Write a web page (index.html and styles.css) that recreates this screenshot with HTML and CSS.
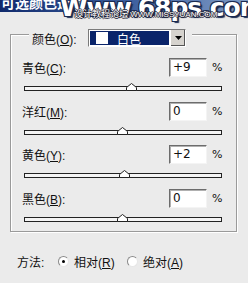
FILE: index.html
```html
<!DOCTYPE html>
<html lang="zh-CN">
<head>
    <meta charset="UTF-8">
    <title>可选颜色选项</title>
    <link rel="stylesheet" href="styles.css">
</head>
<body>
    <div class="window">
        <!-- Title bar -->
        <div class="titlebar">
            <span class="title">可选颜色选项</span>
        </div>

        <!-- Watermark over the title -->
        <div class="watermark">
            <span class="wm-big">Www.68ps.com</span>
            <span class="wm-small"><span class="wm-cn">设计教程论坛</span> WWW.MISSYUAN.COM</span>
        </div>

        <!-- Colour group -->
        <div class="group">
            <div class="group-head">
                <span class="label">颜色(<u>O</u>):</span>
                <div class="dropdown">
                    <div class="dropdown-value">
                        <span class="swatch"></span>
                        <span>白色</span>
                    </div>
                    <div class="dropdown-btn">
                        <svg width="7" height="4" viewBox="0 0 7 4"><path d="M0 0H7L3.5 4Z" fill="#000"/></svg>
                    </div>
                </div>
            </div>

            <div class="rows">
                <div class="row">
                    <div class="row-top">
                        <span class="label">青色(<u>C</u>):</span>
                        <div class="input">+9</div>
                        <span class="pct">%</span>
                    </div>
                    <div class="track">
                        <svg class="thumb" style="left: 54.5%;" width="11" height="8" viewBox="0 0 11 8"><path d="M0.5 7.5V4.5L5.5 0.5L10.5 4.5V7.5Z" fill="#fff" stroke="#222"/></svg>
                    </div>
                </div>

                <div class="row">
                    <div class="row-top">
                        <span class="label">洋红(<u>M</u>):</span>
                        <div class="input">0</div>
                        <span class="pct">%</span>
                    </div>
                    <div class="track">
                        <svg class="thumb" style="left: 50%;" width="11" height="8" viewBox="0 0 11 8"><path d="M0.5 7.5V4.5L5.5 0.5L10.5 4.5V7.5Z" fill="#fff" stroke="#222"/></svg>
                    </div>
                </div>

                <div class="row">
                    <div class="row-top">
                        <span class="label">黄色(<u>Y</u>):</span>
                        <div class="input">+2</div>
                        <span class="pct">%</span>
                    </div>
                    <div class="track">
                        <svg class="thumb" style="left: 51%;" width="11" height="8" viewBox="0 0 11 8"><path d="M0.5 7.5V4.5L5.5 0.5L10.5 4.5V7.5Z" fill="#fff" stroke="#222"/></svg>
                    </div>
                </div>

                <div class="row">
                    <div class="row-top">
                        <span class="label">黑色(<u>B</u>):</span>
                        <div class="input">0</div>
                        <span class="pct">%</span>
                    </div>
                    <div class="track">
                        <svg class="thumb" style="left: 50%;" width="11" height="8" viewBox="0 0 11 8"><path d="M0.5 7.5V4.5L5.5 0.5L10.5 4.5V7.5Z" fill="#fff" stroke="#222"/></svg>
                    </div>
                </div>
            </div>
        </div>

        <!-- Method -->
        <div class="method">
            <span class="method-label">方法:</span>
            <span class="radio checked"></span>
            <span class="radio-text">相对(<u>R</u>)</span>
            <span class="radio"></span>
            <span class="radio-text">绝对(<u>A</u>)</span>
        </div>
    </div>
</body>
</html>
```

FILE: styles.css
```css
body {
    margin: 0;
    padding: 0;
    background-color: #ebebeb;
    font-family: "Liberation Sans", "Noto Sans CJK SC", sans-serif;
    font-size: 12px;
    color: #111;
}

u {
    text-decoration: underline;
    text-underline-offset: 1px;
}

.window {
    position: relative;
    width: 248px;
    height: 283px;
    overflow: hidden;
}

.titlebar {
    height: 12px;
    overflow: hidden;
    background: linear-gradient(to right, #102a6c, #3a5c9c 50%, #7f9cc6);
}

.title {
    display: block;
    margin-top: -5px;
    padding-left: 1px;
    color: white;
    font-weight: bold;
    font-size: 14px;
    line-height: 16px;
}

.watermark {
    position: absolute;
    left: 60px;
    top: -6px;
    width: 190px;
    pointer-events: none;
}

.wm-big {
    display: block;
    color: #fff;
    font-family: "DejaVu Sans", sans-serif;
    font-weight: bold;
    font-size: 25px;
    line-height: 28px;
    letter-spacing: -1px;
    text-shadow: 1px 1px 0 #1a2a50, -1px -1px 0 #1a2a50, 1px -1px 0 #1a2a50, -1px 1px 0 #1a2a50, 2px 2px 1px #1a2a50;
}

.wm-small {
    position: absolute;
    left: 14px;
    top: 16px;
    color: #fff;
    font-size: 8px;
    line-height: 9px;
    white-space: nowrap;
    text-shadow: 1px 0 0 #223, -1px 0 0 #223, 0 1px 0 #223, 0 -1px 0 #223;
}

.wm-cn {
    font-size: 9px;
}

.group {
    margin: 22px 0 0 10px;
    width: 225px;
    height: 196px;
    border: 1px solid #9a9a9a;
    box-shadow: inset 1px 1px 0 #fff, 1px 1px 0 #fff;
}

.group-head {
    display: flex;
    align-items: center;
    width: fit-content;
    margin: -6px 0 0 18px;
    padding: 0 6px 0 3px;
    background-color: #ebebeb;
}

.group-head .label {
    width: 56px;
}

.dropdown {
    display: flex;
    width: 98px;
    height: 18px;
    box-sizing: border-box;
    border: 1px solid #7a7a7a;
    border-right-color: #fff;
    border-bottom-color: #fff;
    background: #fff;
}

.dropdown-value {
    flex: 1;
    display: flex;
    align-items: center;
    gap: 8px;
    margin: 1px;
    padding-left: 5px;
    background-color: #0a246a;
    color: #fff;
}

.swatch {
    width: 12px;
    height: 12px;
    background: #fff;
    border: 1px solid #0a246a;
}

.dropdown-btn {
    width: 14px;
    display: flex;
    align-items: center;
    justify-content: center;
    background: #d6d3ce;
    border-left: 1px solid #fff;
    box-shadow: inset -1px -1px 0 #555;
}

.rows {
    padding: 11px 13px 0 11px;
}

.row {
    height: 43.7px;
}

.row-top {
    display: flex;
    align-items: center;
    height: 19px;
}

.row-top .label {
    flex: 1;
}

.input {
    width: 38px;
    height: 19px;
    box-sizing: border-box;
    padding: 1px 0 0 3px;
    background: #fff;
    border: 1px solid #6c6c6c;
    border-right-color: #f4f4f4;
    border-bottom-color: #f4f4f4;
    box-shadow: inset 1px 1px 0 #b0b0b0;
    font-family: "DejaVu Sans", sans-serif;
    font-size: 12px;
    line-height: 15px;
}

.pct {
    width: 10px;
    margin-left: 5px;
    margin-right: 1px;
    font-family: "DejaVu Sans", sans-serif;
    font-size: 11px;
}

.track {
    position: relative;
    margin: 9px 0 0 2px;
    width: 198px;
    height: 5px;
    box-sizing: border-box;
    border: 1px solid #222;
    background: #f4f4f4;
}

.thumb {
    position: absolute;
    top: -4px;
    margin-left: -6px;
}

.method {
    display: flex;
    align-items: center;
    margin: 22px 0 0 17px;
    height: 14px;
}

.method-label {
    width: 41px;
}

.radio {
    width: 9px;
    height: 9px;
    border-radius: 50%;
    background: #fff;
    border: 1px solid #8a8a8a;
    border-right-color: #e6e6e6;
    border-bottom-color: #e6e6e6;
    display: flex;
    align-items: center;
    justify-content: center;
}

.radio.checked::after {
    content: "";
    width: 3px;
    height: 3px;
    border-radius: 50%;
    background: #000;
}

.radio-text {
    margin-left: 5px;
    width: 53px;
}
```
